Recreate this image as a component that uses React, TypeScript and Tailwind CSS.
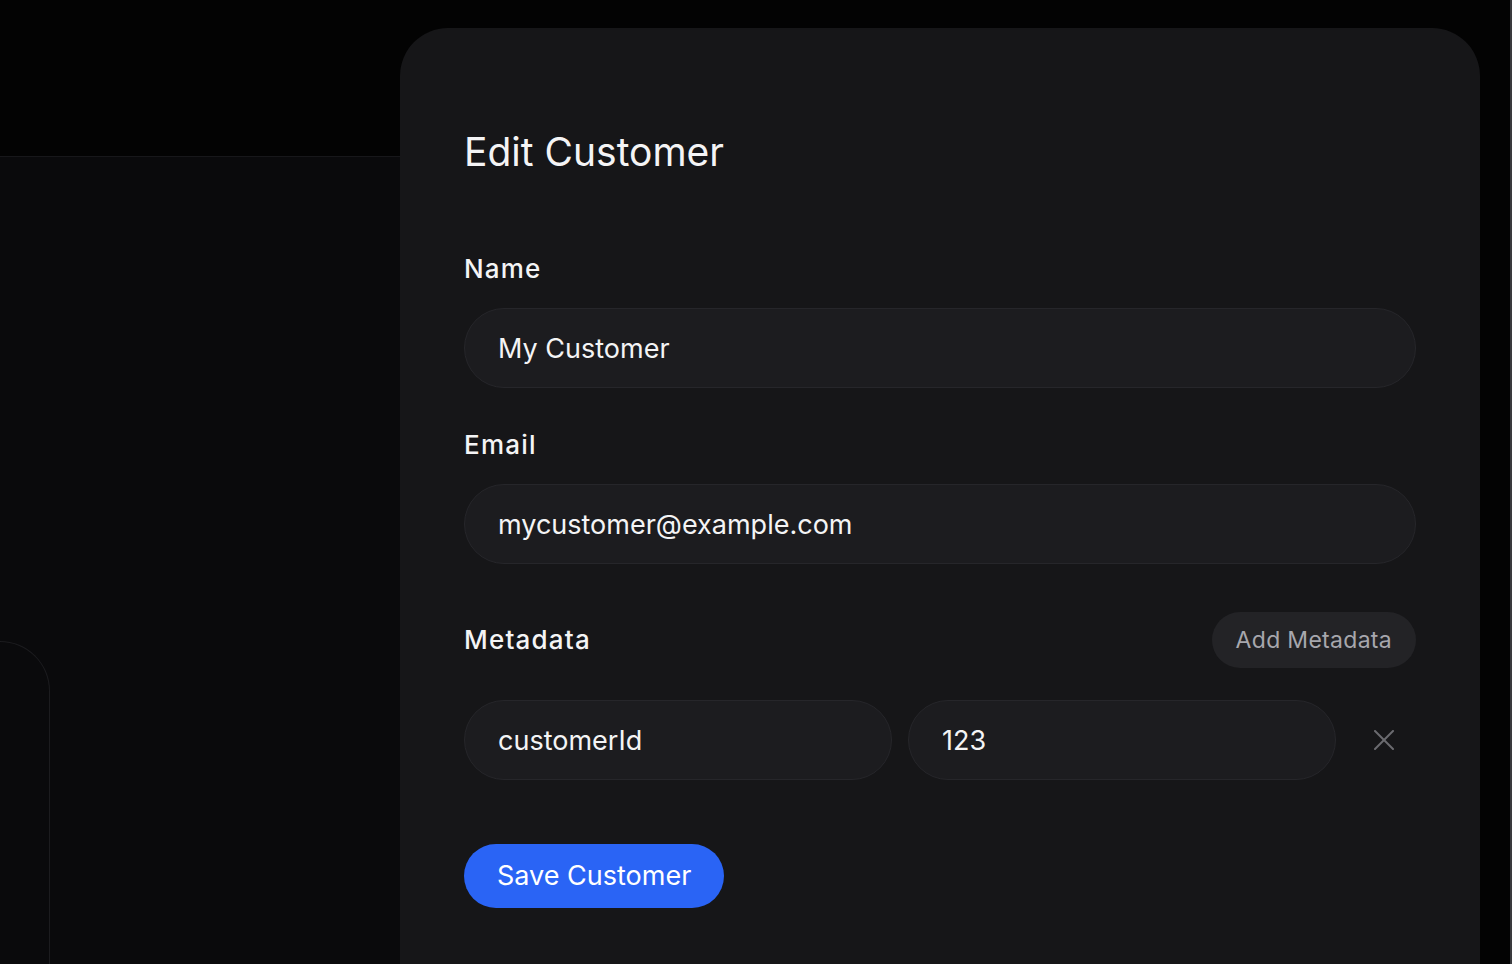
import React from 'react';

const font = { fontFamily: 'Inter, "Noto Sans", sans-serif' };

const TextField = ({ value, className = '' }: { value: string; className?: string }) => (
  <input
    readOnly
    value={value}
    className={`h-20 rounded-full border border-[#26262a] bg-[#1c1c1f] px-[33px] text-[27px] text-[#f4f4f5] outline-none ${className}`}
  />
);

const Field = ({ label, value }: { label: string; value: string }) => (
  <div className="flex flex-col gap-[23px]">
    <label className="text-[26px] leading-8 font-medium tracking-[1.2px] text-[#f4f4f5]">{label}</label>
    <TextField value={value} className="w-full" />
  </div>
);

const EditCustomer = () => {
  return (
    <div className="absolute left-[400px] top-[28px] h-[936px] w-[1080px] rounded-t-[48px] bg-[#161618] px-16 pt-[100px]">
      <h2 className="text-[39px] leading-[48px] font-normal text-[#f4f4f5]">Edit Customer</h2>

      <div className="mt-[77px] flex flex-col gap-[41px]">
        <Field label="Name" value="My Customer" />
        <Field label="Email" value="mycustomer@example.com" />
      </div>

      <div className="mt-12 flex items-center justify-between">
        <span className="text-[26px] leading-8 font-medium tracking-[1.2px] text-[#f4f4f5]">Metadata</span>
        <button className="h-14 rounded-full bg-[#232326] px-6 text-[23px] tracking-[0.3px] text-[#a7a7ad]">Add Metadata</button>
      </div>

      <div className="mt-8 flex items-center gap-4">
        <TextField value="customerId" className="min-w-0 flex-1" />
        <TextField value="123" className="min-w-0 flex-1" />
        <button className="flex h-20 w-16 shrink-0 items-center justify-center text-[#6b6b70]">
          <svg width="20" height="20" viewBox="0 0 20 20" fill="none" stroke="currentColor" strokeWidth="2" strokeLinecap="round">
            <path d="M1 1 19 19" />
            <path d="M19 1 1 19" />
          </svg>
        </button>
      </div>

      <button className="mt-16 h-16 rounded-full bg-[#2a64f5] px-[33px] text-[27px] text-white">Save Customer</button>
    </div>
  );
};

export default function App() {
  return (
    <div className="relative flex h-[964px] w-[1512px] overflow-hidden bg-[#030303]" style={font}>
      <div className="flex w-[1480px] flex-col">
        <div className="h-[156px] shrink-0" />
        <div className="flex flex-1 border-t border-[#17171a] bg-[#0a0a0c]">
          <div className="mt-[484px] ml-[-50px] w-[100px] rounded-tr-[50px] border-t border-r border-[#1c1c1f]" />
        </div>
      </div>
      <div className="flex-1" />
      <div className="w-[2px] bg-[#3a3a3d]" />
      <EditCustomer />
    </div>
  );
}
